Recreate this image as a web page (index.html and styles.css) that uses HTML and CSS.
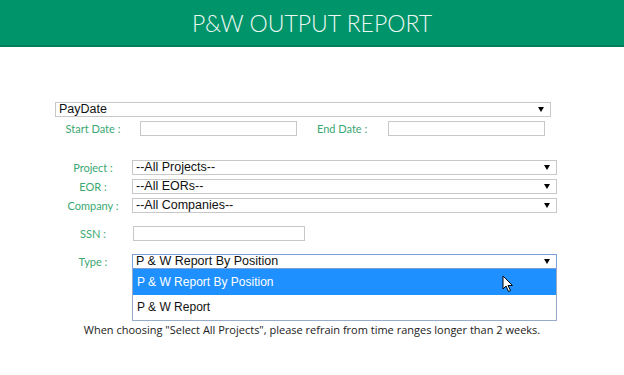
FILE: index.html
```html
<!DOCTYPE html>
<html lang="en">
<head>
    <meta charset="UTF-8">
    <title>P&amp;W Output Report</title>
    <link rel="stylesheet" href="styles.css">
</head>
<body>
    <header class="banner">
        <h1>P&amp;W OUTPUT REPORT</h1>
    </header>

    <main class="report-form">
        <div class="select wide">PayDate<span class="arrow"></span></div>

        <div class="row dates">
            <label class="lbl">Start Date :</label>
            <input type="text" class="text date">
            <label class="lbl end-lbl">End Date :</label>
            <input type="text" class="text date">
        </div>

        <div class="row project">
            <label class="lbl">Project :</label>
            <div class="select">--All Projects--<span class="arrow"></span></div>
        </div>
        <div class="row tight">
            <label class="lbl">EOR :</label>
            <div class="select">--All EORs--<span class="arrow"></span></div>
        </div>
        <div class="row tight">
            <label class="lbl">Company :</label>
            <div class="select">--All Companies--<span class="arrow"></span></div>
        </div>

        <div class="row spaced">
            <label class="lbl">SSN :</label>
            <input type="text" class="text ssn">
        </div>

        <div class="row spaced type-row">
            <label class="lbl">Type :</label>
            <div class="type-box">
                <div class="select focused">P &amp; W Report By Position<span class="arrow"></span></div>
                <ul class="options">
                    <li class="active">P &amp; W Report By Position</li>
                    <li>P &amp; W Report</li>
                </ul>
                <svg class="cursor" width="12" height="18" viewBox="0 0 12 18">
                    <path d="M1 1 L1 14 L4 11 L6.5 16.5 L8.5 15.5 L6 10.5 L10.5 10.5 Z" fill="#fff" stroke="#000" stroke-width="1"/>
                </svg>
            </div>
        </div>

        <p class="note">When choosing "Select All Projects", please refrain from time ranges longer than 2 weeks.</p>
    </main>
</body>
</html>
```

FILE: styles.css
```css
body {
    margin: 0;
    background-color: white;
    font-family: Lato, "Open Sans", sans-serif;
}

.banner {
    background-color: #00946a;
    border-bottom: 2px solid #007f5a;
    height: 45px;
    display: flex;
    align-items: center;
    justify-content: center;
}

.banner h1 {
    margin: 0;
    font-family: Lato, sans-serif;
    font-weight: 300;
    font-size: 23px;
    color: #eef8f3;
}

.report-form {
    padding: 55px 0 0 55px;
}

.select {
    position: relative;
    box-sizing: border-box;
    height: 15px;
    width: 425px;
    border: 1px solid #c8c8c8;
    background-color: white;
    font-family: "Liberation Sans", Arial, sans-serif;
    font-size: 12.5px;
    line-height: 13px;
    padding-left: 3px;
    color: #111;
}

.select.wide {
    width: 496px;
}

.arrow {
    position: absolute;
    right: 6px;
    top: 4px;
    width: 0;
    height: 0;
    border-left: 3px solid transparent;
    border-right: 3px solid transparent;
    border-top: 5px solid #000;
}

.row {
    display: flex;
    align-items: center;
}

.lbl {
    width: 66px;
    margin-left: 5px;
    margin-right: 6px;
    text-align: center;
    font-size: 11px;
    color: #3aa872;
}

.dates {
    margin-top: 4px;
}

.text {
    box-sizing: border-box;
    height: 15px;
    border: 1px solid #c8c8c8;
    padding: 0;
    margin: 0;
}

.date {
    width: 157px;
    margin-left: 8px;
}

.dates .end-lbl {
    width: auto;
    margin-left: 20px;
    margin-right: 13px;
}

.project {
    margin-top: 24px;
}

.tight {
    margin-top: 4px;
}

.spaced {
    margin-top: 13px;
}

.ssn {
    width: 172px;
    margin-left: 1px;
}

.type-row {
    align-items: flex-start;
}

.type-row .lbl {
    line-height: 15px;
}

.type-box {
    position: relative;
}

.select.focused {
    border-color: #7a9fd8;
}

.options {
    list-style: none;
    margin: 0;
    padding: 0;
    width: 425px;
    box-sizing: border-box;
    border: 1px solid #9aaccc;
    border-top: none;
    font-family: "Liberation Sans", Arial, sans-serif;
    font-size: 12px;
    color: #111;
}

.options li {
    height: 25px;
    line-height: 25px;
    padding-left: 4px;
}

.options li.active {
    height: 26px;
    line-height: 26px;
    background-color: #1e90ff;
    color: white;
}

.cursor {
    position: absolute;
    left: 370px;
    top: 21px;
}

.note {
    margin: 1px 0 0 -55px;
    text-align: center;
    font-family: "Open Sans", sans-serif;
    font-size: 11px;
    color: #222;
}
```
